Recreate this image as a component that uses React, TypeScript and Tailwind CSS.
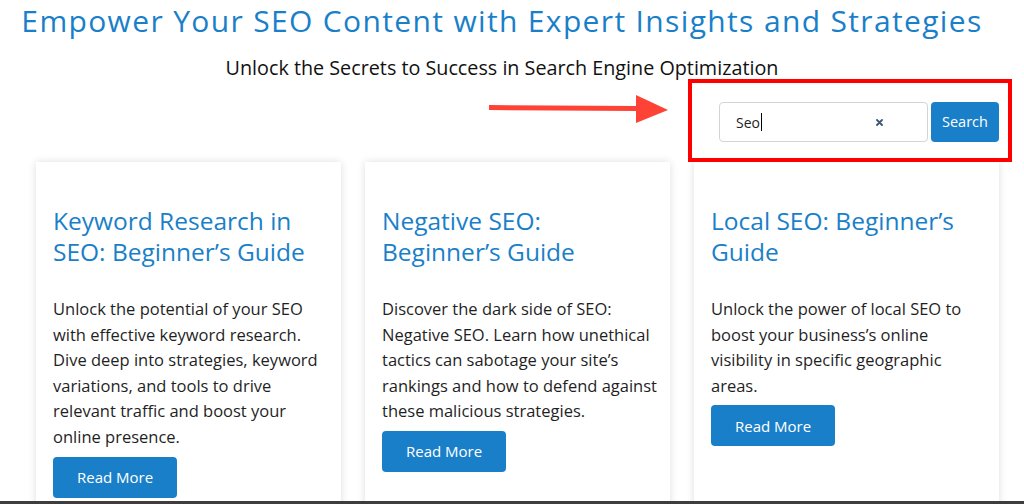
import React from 'react'

const posts = [
  {
    id: 'keyword',
    title: 'Keyword Research in SEO: Beginner’s Guide',
    text: 'Unlock the potential of your SEO with effective keyword research. Dive deep into strategies, keyword variations, and tools to drive relevant traffic and boost your online presence.',
  },
  {
    id: 'negative',
    title: 'Negative SEO: Beginner’s Guide',
    text: 'Discover the dark side of SEO: Negative SEO. Learn how unethical tactics can sabotage your site’s rankings and how to defend against these malicious strategies.',
  },
  {
    id: 'local',
    title: 'Local SEO: Beginner’s Guide',
    text: 'Unlock the power of local SEO to boost your business’s online visibility in specific geographic areas.',
  },
]

function SearchForm() {
  return (
    <div className="flex justify-end gap-[3px]">
      <div className="flex h-[40px] w-[209px] items-center justify-between rounded-[4px] border border-[#d4d4d4] bg-white pl-[16px] pr-[44px]">
        <span className="flex items-center text-[14px] text-[#222]">
          Seo
          <span className="ml-[1px] h-[18px] w-[1px] bg-black" />
        </span>
        <svg width="7" height="7" viewBox="0 0 7 7" className="mt-[1px]">
          <path d="M1 1L6 6M6 1L1 6" stroke="#3b5478" strokeWidth="1.8" strokeLinecap="round" />
        </svg>
      </div>
      <button className="h-[40px] w-[68px] rounded-[4px] bg-[#1a7fc9] text-[14.5px] text-white">
        Search
      </button>
    </div>
  )
}

function PostCard({ post }: { post: (typeof posts)[number] }) {
  return (
    <div className="w-[305px] shrink-0 bg-white pl-[17px] pr-[12px] pt-[43px] pb-10 shadow-[0_0_8px_rgba(0,0,0,0.13)]">
      <h3 className="text-[24.5px] leading-[31px] text-[#1a7fc9]">{post.title}</h3>
      <p className="mt-[29px] text-[16.5px] leading-[25.6px] text-[#1f1f1f]">{post.text}</p>
      <button className="mt-[7px] h-[41px] rounded-[4px] bg-[#1a7fc9] px-[24px] text-[15px] text-white">
        Read More
      </button>
    </div>
  )
}

export default function App() {
  return (
    <div
      className="relative h-[504px] overflow-hidden border-b-[3px] border-[#3d3d3d] bg-white pt-[4px]"
      style={{ fontFamily: '"Open Sans", "Noto Sans", sans-serif' }}
    >
      {/* Header */}
      <h1 className="w-[1004px] whitespace-nowrap text-center text-[30px] leading-[33px] tracking-[1.35px] text-[#1a7fc9]">
        Empower Your SEO Content with Expert Insights and Strategies
      </h1>
      <p className="mt-[17px] w-[1004px] text-center text-[19.75px] leading-[28px] text-[#111]">
        Unlock the Secrets to Success in Search Engine Optimization
      </p>

      <div className="ml-[36px] w-[963px]">
        <div className="mt-[20px]">
          <SearchForm />
        </div>

        {/* Posts */}
        <div className="mt-[20px] flex gap-[24px]">
          {posts.map((post) => (
            <PostCard key={post.id} post={post} />
          ))}
        </div>
      </div>

      {/* Annotation overlay */}
      <svg className="absolute left-[486px] top-[93px]" width="186" height="32" viewBox="0 0 186 32">
        <path d="M3 14.5L152 15.5" stroke="#fe4236" strokeWidth="5" />
        <path d="M150 2L182 17L150 30Z" fill="#fe4236" />
      </svg>
      <div className="absolute left-[688px] top-[79px] h-[83px] w-[324px] border-[4px] border-[#ff0000]" />
    </div>
  )
}
